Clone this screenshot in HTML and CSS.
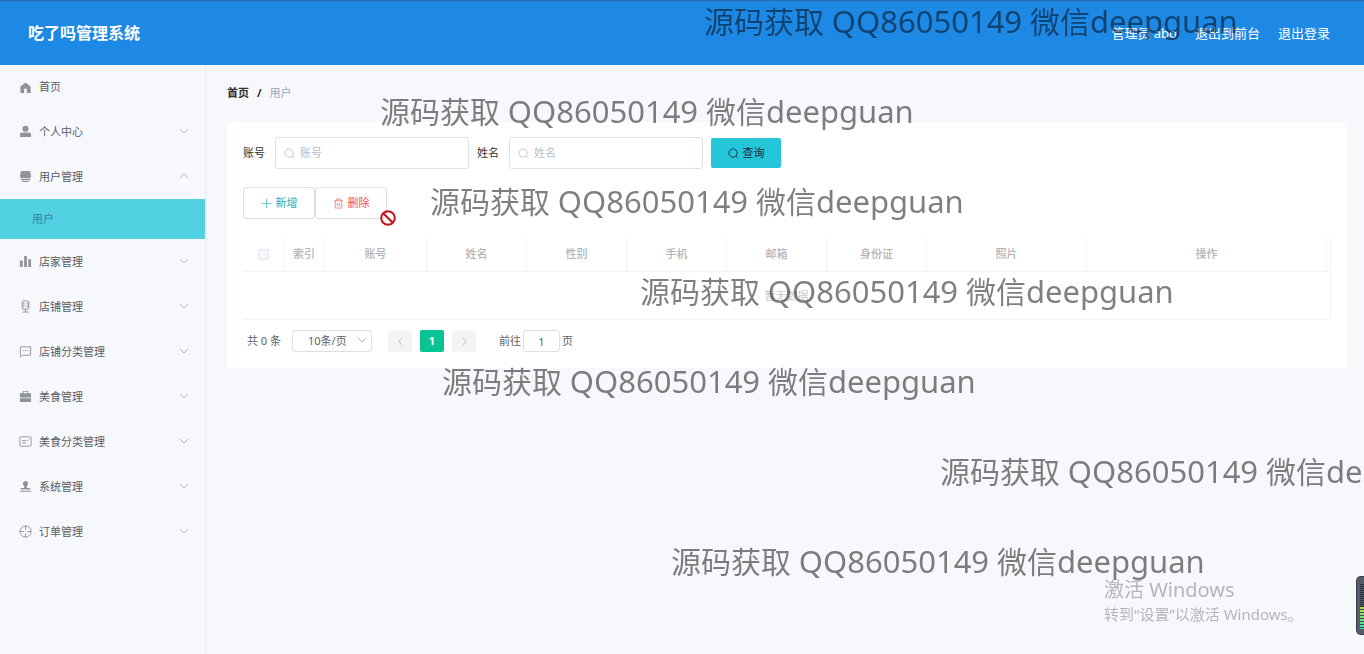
FILE: index.html
```html
<!DOCTYPE html>
<html lang="zh-CN">
<head>
    <meta charset="UTF-8">
    <meta name="viewport" content="width=device-width, initial-scale=1.0">
    <title>吃了吗管理系统</title>
    <link rel="stylesheet" href="styles.css">
</head>
<body>
    <svg class="symbols" aria-hidden="true">
        <symbol id="down" viewBox="0 0 10 10"><path d="M1 2l4 4 4-4"/></symbol>
        <symbol id="up" viewBox="0 0 10 10"><path d="M1 6l4-4 4 4"/></symbol>
        <symbol id="search" viewBox="0 0 12 12"><circle cx="5.5" cy="5.5" r="4.5"/><path d="M8.8 8.8l2.4 2.4"/></symbol>
    </svg>

    <header class="header">
        <h1 class="title">吃了吗管理系统</h1>
        <nav class="user-nav">
            <span>管理员 abo</span>
            <a href="#">退出到前台</a>
            <a href="#">退出登录</a>
        </nav>
    </header>

    <div class="layout">
        <aside class="sidebar">
            <a href="#" class="menu-item menu-home">
                <svg class="icon solid" viewBox="0 0 14 14"><path d="M7 1.5L1.5 6v7h4V9.5a1.5 1.5 0 0 1 3 0V13h4V6z"/></svg>
                首页
            </a>
            <a href="#" class="menu-item">
                <svg class="icon solid" viewBox="0 0 14 14"><circle cx="7" cy="4" r="3.3"/><path d="M1 13v-2.500q0-2.500 2.500-2.500h7q2.500 0 2.500 2.500V13z"/></svg>
                个人中心
                <svg class="arrow"><use href="#down"/></svg>
            </a>
            <a href="#" class="menu-item">
                <svg class="icon solid" viewBox="0 0 14 14"><path d="M3 1h8q1 0 1.200 1L13 7q0 1.500-1.500 1.500h-9Q1 8.500 1 7l.8-5q.2-1 1.200-1zM2 9.300h10V11H2zM3.500 11.900h7V13h-7z"/></svg>
                用户管理
                <svg class="arrow"><use href="#up"/></svg>
            </a>
            <a href="#" class="submenu-item">用户</a>
            <a href="#" class="menu-item">
                <svg class="icon solid" viewBox="0 0 14 14"><path d="M1 6h3v7H1zM5.500 1h3v12h-3zM10 4.500h3V13h-3z"/></svg>
                店家管理
                <svg class="arrow"><use href="#down"/></svg>
            </a>
            <a href="#" class="menu-item">
                <svg class="icon" viewBox="0 0 14 14"><rect x="3.5" y="1" width="7" height="9" rx="1"/><path d="M3.500 3.500H6M3.500 5.500H6M3.500 7.500H6M8 3.500h2.500M8 5.500h2.500M8 7.500h2.500M7 10v3M3.500 13h7"/></svg>
                店铺管理
                <svg class="arrow"><use href="#down"/></svg>
            </a>
            <a href="#" class="menu-item">
                <svg class="icon" viewBox="0 0 14 14"><path d="M1.500 2h11v9H4l-2.500 1.700zM4 6h1.200M6.400 6h1.200M8.800 6H10"/></svg>
                店铺分类管理
                <svg class="arrow"><use href="#down"/></svg>
            </a>
            <a href="#" class="menu-item">
                <svg class="icon solid" viewBox="0 0 14 14"><path d="M4 3.500v-2.500h6v2.500h3V8H1V3.500zM5 3.500h4V2H5zM1 8.800h12V13H1z"/></svg>
                美食管理
                <svg class="arrow"><use href="#down"/></svg>
            </a>
            <a href="#" class="menu-item">
                <svg class="icon" viewBox="0 0 14 14"><rect x="1" y="2" width="12" height="10" rx="1"/><path d="M3.500 6h4M3.500 8.500h4M8.500 6.500l2-1.500"/></svg>
                美食分类管理
                <svg class="arrow"><use href="#down"/></svg>
            </a>
            <a href="#" class="menu-item">
                <svg class="icon solid" viewBox="0 0 14 14"><path d="M7 1a3 3 0 0 1 1.500 5.500v2h2.500q1.500 0 1.500 1.700h-11q0-1.700 1.500-1.700h2.500v-2A3 3 0 0 1 7 1zM1 11.500h12v1.200H1z"/></svg>
                系统管理
                <svg class="arrow"><use href="#down"/></svg>
            </a>
            <a href="#" class="menu-item">
                <svg class="icon" viewBox="0 0 14 14"><circle cx="7" cy="7" r="6"/><path d="M7 1v4M7 9v4M1 7h4M9 7h4"/></svg>
                订单管理
                <svg class="arrow"><use href="#down"/></svg>
            </a>
        </aside>

        <main class="content">
            <nav class="breadcrumb">
                <a href="#">首页</a>
                <b>/</b>
                <span>用户</span>
            </nav>

            <section class="card">
                <form class="search-form">
                    <label for="account">账号</label>
                    <div class="input-box">
                        <svg class="search-icon"><use href="#search"/></svg>
                        <input type="text" id="account" placeholder="账号">
                    </div>
                    <label for="username">姓名</label>
                    <div class="input-box">
                        <svg class="search-icon"><use href="#search"/></svg>
                        <input type="text" id="username" placeholder="姓名">
                    </div>
                    <button type="button" class="btn-query">
                        <svg class="search-icon"><use href="#search"/></svg>
                        查询
                    </button>
                </form>

                <div class="actions">
                    <button type="button" class="btn btn-add">
                        <svg class="btn-icon" viewBox="0 0 12 12"><path d="M6 1v10M1 6h10"/></svg>
                        新增
                    </button>
                    <button type="button" class="btn btn-delete" disabled>
                        <svg class="btn-icon" viewBox="0 0 12 12"><path d="M1 3h10M4 3V1h4v2M2.500 3v8h7V3M5 5.500v3.500M7 5.500v3.500"/></svg>
                        删除
                    </button>
                </div>

                <table class="table">
                    <colgroup>
                        <col class="col-small"><col class="col-small"><col>
                        <col class="col-mid"><col class="col-mid"><col class="col-mid"><col class="col-mid"><col class="col-mid">
                        <col class="col-photo"><col class="col-action"><col class="col-gutter">
                    </colgroup>
                    <thead>
                        <tr>
                            <th><input type="checkbox" class="check" aria-label="全选" disabled></th>
                            <th>索引</th>
                            <th>账号</th>
                            <th>姓名</th>
                            <th>性别</th>
                            <th>手机</th>
                            <th>邮箱</th>
                            <th>身份证</th>
                            <th>照片</th>
                            <th>操作</th>
                            <th></th>
                        </tr>
                    </thead>
                    <tbody>
                        <tr><td colspan="11">暂无数据</td></tr>
                    </tbody>
                </table>

                <div class="pagination">
                    <span class="total">共 0 条</span>
                    <div class="page-size">
                        <select aria-label="每页条数"><option>10条/页</option></select>
                        <svg class="arrow"><use href="#down"/></svg>
                    </div>
                    <div class="pager">
                        <button type="button" aria-label="上一页" disabled><svg viewBox="0 0 10 10"><path d="M7 1L3 5l4 4"/></svg></button>
                        <button type="button" class="active">1</button>
                        <button type="button" aria-label="下一页" disabled><svg viewBox="0 0 10 10"><path d="M3 1l4 4-4 4"/></svg></button>
                    </div>
                    <div class="jump">
                        <label for="page">前往</label>
                        <input type="text" id="page" value="1">
                        <span>页</span>
                    </div>
                </div>
            </section>
        </main>
    </div>

    <!-- 水印层 -->
    <div class="overlay">
        <p class="mark mark-1">源码获取 <span>QQ86050149</span> 微信<span>deepguan</span></p>
        <p class="mark mark-2">源码获取 <span>QQ86050149</span> 微信<span>deepguan</span></p>
        <p class="mark mark-3">源码获取 <span>QQ86050149</span> 微信<span>deepguan</span></p>
        <p class="mark mark-4">源码获取 <span>QQ86050149</span> 微信<span>deepguan</span></p>
        <p class="mark mark-5">源码获取 <span>QQ86050149</span> 微信<span>deepguan</span></p>
        <p class="mark mark-6">源码获取 <span>QQ86050149</span> 微信<span>deepguan</span></p>
        <p class="mark mark-7">源码获取 <span>QQ86050149</span> 微信<span>deepguan</span></p>
        <div class="activate">
            <p class="activate-title">激活 Windows</p>
            <p>转到“设置”以激活 Windows。</p>
        </div>
        <svg class="cursor" viewBox="0 0 16 16"><circle cx="8" cy="8" r="6.800"/><path d="M3.200 3.200l9.600 9.600"/></svg>
        <div class="meter"><div class="meter-off"></div><div class="meter-on"></div></div>
    </div>
</body>
</html>
```
FILE: styles.css
```css
:root {
    --blue: #1e88e5;
    --cyan: #26c6da;
    --green: #08c393;
    --background: #f6f8fb;
    --border: #dcdfe6;
    --line: #f3f4f7;
    --muted: #909399;
}
* {
    box-sizing: border-box;
}
body {
    display: flex;
    flex-direction: column;
    min-height: 100vh;
    margin: 0;
    background: var(--background);
    color: #303133;
    font-family: "Noto Sans", "Noto Sans CJK SC", sans-serif;
    font-size: 11px;
    line-height: 16px;
}
a {
    color: inherit;
    text-decoration: none;
}
p {
    margin: 0;
}
input, button, select {
    font: inherit;
    color: inherit;
}
svg {
    flex: none;
    fill: none;
    stroke: currentColor;
    stroke-width: 1;
}
.symbols {
    position: absolute;
    width: 0;
    height: 0;
}

/* 顶部 */
.header {
    display: flex;
    align-items: center;
    justify-content: space-between;
    height: 65px;
    padding: 0 34px 0 28px;
    border-top: 1px solid #2b6ca8;
    background: var(--blue);
    color: #fff;
}
.title {
    margin: 0;
    font-size: 16px;
    line-height: 24px;
}
.user-nav {
    display: flex;
    gap: 18px;
    font-size: 13px;
}

/* 侧边栏 */
.layout {
    display: flex;
    flex: 1;
}
.sidebar {
    flex: none;
    width: 207px;
    border-right: 2px solid #eff0f3;
    color: #5a5e66;
}
.menu-item {
    display: flex;
    align-items: center;
    gap: 7px;
    height: 45px;
    padding: 0 16px 0 19px;
}
.menu-home {
    height: 44px;
}
.icon {
    width: 13px;
    height: 13px;
    color: var(--muted);
}
.solid {
    fill: currentColor;
    fill-rule: evenodd;
    stroke: none;
}
.arrow {
    width: 10px;
    height: 10px;
    color: #b4b7be;
}
.menu-item .arrow {
    margin-left: auto;
}
.submenu-item {
    display: flex;
    align-items: center;
    height: 40px;
    padding-left: 32px;
    background: #51d1e1;
    color: #3b7fa5;
}

/* 内容区 */
.content {
    flex: 1;
    min-width: 0;
    padding: 20px 17px 20px 20px;
}
.breadcrumb {
    display: flex;
    gap: 8px;
    margin-bottom: 21px;
}
.breadcrumb a {
    font-weight: bold;
}
.breadcrumb span {
    color: #97a8be;
}
.card {
    padding: 15px 16px 16px;
    background: #fff;
}
.search-form {
    display: flex;
    align-items: center;
    gap: 8px;
}
.search-form label {
    min-width: 24px;
}
.input-box {
    display: flex;
    align-items: center;
    gap: 5px;
    width: 194px;
    height: 32px;
    padding: 0 8px;
    border: 1px solid var(--border);
    border-radius: 3px;
    color: #c0c4cc;
}
.input-box input {
    width: 100%;
    min-width: 0;
    padding: 0;
    border: 0;
    outline: 0;
    background: none;
    color: #606266;
}
.input-box input::placeholder {
    color: #b8bcc4;
}
.search-icon {
    width: 11px;
    height: 11px;
}
.btn-query {
    display: flex;
    align-items: center;
    justify-content: center;
    gap: 4px;
    width: 70px;
    height: 30px;
    padding: 0;
    border: 0;
    border-radius: 2px;
    background: var(--cyan);
    color: #1b2a33;
}
.actions {
    display: flex;
    margin: 18px 0;
}
.btn {
    display: flex;
    align-items: center;
    justify-content: center;
    gap: 4px;
    width: 72px;
    height: 32px;
    padding: 0;
    border: 1px solid var(--border);
    border-radius: 3px;
    background: #fff;
}
.btn-icon {
    width: 11px;
    height: 11px;
    opacity: 0.7;
}
.btn-add {
    color: #2aa9b8;
}
.btn-delete {
    color: #f05050;
}

/* 表格 */
.table {
    width: 100%;
    border-right: 1px solid var(--line);
    border-collapse: separate;
    border-spacing: 0;
    table-layout: fixed;
    color: #b0b3b9;
    text-align: center;
}
.table th {
    height: 35px;
    padding: 0;
    border-right: 1px solid var(--line);
    border-bottom: 1px solid var(--line);
    font-weight: 500;
}
.table th:last-child {
    border-right: 0;
}
.table td {
    height: 48px;
    padding: 0;
    border-bottom: 1px solid var(--line);
    color: #c8cacf;
}
.col-small {
    width: 41px;
}
.col-mid {
    width: 100px;
}
.col-photo {
    width: 160px;
}
.col-action {
    width: 240px;
}
.col-gutter {
    width: 3px;
}
.check {
    display: block;
    width: 11px;
    height: 11px;
    margin: 0 auto;
    appearance: none;
    border: 1px solid #e4e7ee;
    border-radius: 2px;
    background: #f5f7fa;
}

/* 分页 */
.pagination {
    display: flex;
    align-items: center;
    padding: 10px 4px 0;
    color: #606266;
}
.page-size {
    display: flex;
    align-items: center;
    width: 80px;
    height: 22px;
    margin: 0 16px 0 11px;
    padding: 0 4px 0 15px;
    border: 1px solid var(--border);
    border-radius: 3px;
}
.page-size select {
    flex: 1;
    min-width: 0;
    padding: 0;
    appearance: none;
    border: 0;
    background: none;
}
.pager {
    display: flex;
    gap: 8px;
}
.pager button {
    display: flex;
    align-items: center;
    justify-content: center;
    width: 24px;
    height: 22px;
    padding: 0;
    border: 0;
    border-radius: 2px;
    background: #f4f4f5;
    color: #b4b7be;
}
.pager svg {
    width: 9px;
    height: 9px;
}
.pager .active {
    background: var(--green);
    color: #fff;
    font-weight: bold;
}
.jump {
    display: flex;
    align-items: center;
    gap: 2px;
    margin-left: 23px;
}
.jump input {
    width: 37px;
    height: 22px;
    padding: 0;
    border: 1px solid var(--border);
    border-radius: 3px;
    text-align: center;
}

/* 水印 */
.overlay {
    position: fixed;
    inset: 0;
    overflow: hidden;
    pointer-events: none;
}
.mark {
    position: absolute;
    color: rgba(0, 0, 0, 0.5);
    font-size: 30px;
    line-height: 40px;
    white-space: nowrap;
}
.mark span {
    font-size: 31px;
}
.mark-1 { left: 704px; top: 1px; }
.mark-2 { left: 380px; top: 91px; }
.mark-3 { left: 430px; top: 181px; }
.mark-4 { left: 640px; top: 271px; }
.mark-5 { left: 442px; top: 361px; }
.mark-6 { left: 940px; top: 451px; }
.mark-7 { left: 671px; top: 541px; }
.activate {
    position: absolute;
    right: 60px;
    bottom: 28px;
    width: 200px;
    color: #b4b6b9;
    font-size: 15px;
    line-height: 24px;
    white-space: nowrap;
}
.activate-title {
    font-size: 20px;
}
.cursor {
    position: absolute;
    left: 380px;
    top: 210px;
    width: 16px;
    height: 16px;
    color: #c4141c;
    stroke-width: 2;
}
.meter {
    position: absolute;
    right: 0;
    bottom: 19px;
    width: 8px;
    height: 59px;
    padding: 7px 0 7px 3px;
    border: 1px solid #3a3e4a;
    border-right: 0;
    border-radius: 5px 0 0 5px;
    background: #555b69;
}
.meter-off {
    height: 23px;
    background: repeating-linear-gradient(#2c303b 0 1px, #555b69 1px 2px);
}
.meter-on {
    height: 22px;
    background: repeating-linear-gradient(transparent 0 2px, #3f4a50 2px 3px), linear-gradient(#b5e04a, #3fdcb4);
}
```
